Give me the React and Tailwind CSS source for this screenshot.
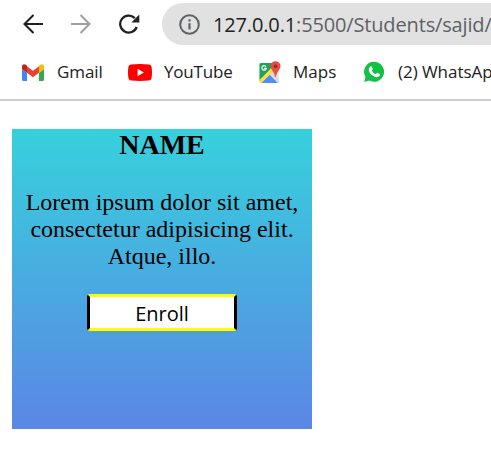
function BackIcon() {
  return (
    <svg className="ml-[23px] shrink-0" width="20" height="20" viewBox="0 0 20 20" fill="none" stroke="#202124" strokeWidth="2.1">
      <path d="M20 10H1.8M10.5 1L1.5 10l9 9" />
    </svg>
  );
}

function ForwardIcon() {
  return (
    <svg className="ml-7 shrink-0" width="20" height="20" viewBox="0 0 20 20" fill="none" stroke="#a0a0a1" strokeWidth="2.1">
      <path d="M0 10h18.2M9.5 1l9 9-9 9" />
    </svg>
  );
}

function ReloadIcon() {
  return (
    <svg className="ml-7 shrink-0" width="21" height="20" viewBox="0 0 21 20" fill="none">
      <path d="M17.7 13A8.5 8.5 0 1 1 15.8 4.100" stroke="#202124" strokeWidth="2.3" />
      <path d="M20.3 .6v8h-8z" fill="#202124" />
    </svg>
  );
}

function InfoIcon() {
  return (
    <svg className="shrink-0" width="21" height="21" viewBox="0 0 21 21" fill="none" stroke="#5f6368" strokeWidth="2">
      <circle cx="10.5" cy="10.5" r="9.3" />
      <path d="M10.5 9.2v6.2M10.5 5.3v2.2" strokeWidth="2.2" />
    </svg>
  );
}

function GmailIcon() {
  return (
    <svg className="shrink-0" width="22" height="17" viewBox="0 0 22 17">
      <path d="M0 5l5 3.8V17H1.5Q0 17 0 15.5z" fill="#4285f4" />
      <path d="M17 8.8L22 5v10.5q0 1.5-1.5 1.5H17z" fill="#34a853" />
      <path d="M5 2.3l6 4.5 6-4.5v6.5l-6 4.4-6-4.4z" fill="#ea4335" />
      <path d="M0 5V2.3C0 .3 2.2-.5 3.8.8L5 1.8v7z" fill="#c5221f" />
      <path d="M17 1.8L18.2.8C19.8-.5 22 .3 22 2.3V5l-5 3.8z" fill="#fbbc04" />
    </svg>
  );
}

function YouTubeIcon() {
  return (
    <svg className="shrink-0" width="24" height="17" viewBox="0 0 24 17">
      <path d="M3 .4Q12-.4 21 .4q2.3.2 2.6 2.6.8 5.5 0 11-.3 2.4-2.6 2.6-9 .8-18 0Q.7 16.4 .4 14q-.8-5.5 0-11Q.7.6 3 .4z" fill="#f00" />
      <path d="M9.6 4.8v7.4l6.3-3.7z" fill="#fff" />
    </svg>
  );
}

function MapsIcon() {
  return (
    <svg className="shrink-0" width="22" height="23" viewBox="0 0 22 23">
      <rect x=".5" y="2" width="19.5" height="20" rx="1.5" fill="#e6e6e6" />
      <path d="M.5 20V3.5Q.5 2 2 2h14L1.500 21z" fill="#1fa25a" />
      <path d="M.5 19L14 5.500l2.800 2.800L2.500 22H2Q.5 22 .5 20.500z" fill="#ffdc48" />
      <path d="M2.500 22l8.300-8.200L19 22z" fill="#4c8df6" />
      <path d="M11 13.500l2.300-2.300L20 18v2.500q0 1.500-1 1.500z" fill="#d9dadb" />
      <path d="M7 5.700A2.200 2.200 0 1 0 7.300 7.300H5.200" fill="none" stroke="#fff" strokeWidth="1.2" />
      <path d="M16.500.3a5 5 0 0 1 5 5c0 3.400-3.800 4.800-4.400 10.500h-1.200c-.6-5.700-4.400-7.100-4.400-10.500a5 5 0 0 1 5-5z" fill="#e94b3f" />
      <circle cx="16.5" cy="5.3" r="1.7" fill="#852c24" />
    </svg>
  );
}

function WhatsAppIcon() {
  return (
    <svg className="shrink-0" width="22" height="22" viewBox="0 0 22 22">
      <path d="M11 .8a10 10 0 1 1-4.700 18.800L1.200 21l1.300-5A10 10 0 0 1 11 .8z" fill="#12c143" />
      <path d="M7.400 5.500c.8-.5 1.200-.2 1.500.5l.8 1.800c.3.7-.9 1.300-.8 1.800.8 1.700 2 2.800 3.700 3.500.7.200 1.300-1.500 1.900-1.200l2.100 1c.6.300.5 1.300-.2 2.200-1.500 1.800-4.300 1-6.400-.3-2-1.200-3.800-3.400-4.200-5.400-.3-1.800.6-3.200 1.600-3.900z" fill="#fff" />
    </svg>
  );
}

export default function App() {
  return (
    <div className="h-[461px] w-[491px] overflow-hidden bg-white font-['Open_Sans',sans-serif] text-[#202124]">
      <header className="h-[101px] border-b-2 border-[#cccccc]">
        <div className="flex h-12 items-center">
          <BackIcon />
          <ForwardIcon />
          <ReloadIcon />
          <div className="ml-[22px] flex h-[42px] w-[400px] shrink-0 items-center rounded-l-full bg-[#e1e1e1] pl-[17px]">
            <InfoIcon />
            <span className="ml-[13px] pt-px text-[20px] tracking-[-0.15px] whitespace-nowrap text-[#606164]">
              <span className="text-[#202124]">127.0.0.1</span>:5500/Students/sajid/
            </span>
          </div>
        </div>
        <nav className="flex h-12 items-center pl-[22px] text-[17px] whitespace-nowrap">
          <GmailIcon />
          <span className="ml-[13px] w-[71px] shrink-0 tracking-[-0.1px]">Gmail</span>
          <YouTubeIcon />
          <span className="ml-3 w-[95px] shrink-0 tracking-[-0.2px]">YouTube</span>
          <MapsIcon />
          <span className="ml-3 w-[70px] shrink-0">Maps</span>
          <WhatsAppIcon />
          <span className="ml-[13px] shrink-0 tracking-[-0.05px]">(2) WhatsApp</span>
        </nav>
      </header>
      <main className="mt-7 ml-3 flex h-[300px] w-[300px] flex-col items-center bg-linear-to-b/srgb from-[#36d1dc] to-[#5b86e5] text-center font-['Liberation_Serif',serif] text-black">
        <h2 className="h-8 text-[28px] leading-8 font-bold">NAME</h2>
        <p className="mt-7 text-[24px] leading-[27px] whitespace-nowrap">
          Lorem ipsum dolor sit amet,
          <br />
          consectetur adipisicing elit.
          <br />
          Atque, illo.
        </p>
        <button className="mt-6 h-[37px] w-[150px] rounded-[3px] border-3 border-x-black border-y-[#ffff00] bg-white pt-0.5 font-['Open_Sans',sans-serif] text-[20px] leading-none">
          Enroll
        </button>
      </main>
    </div>
  );
}
